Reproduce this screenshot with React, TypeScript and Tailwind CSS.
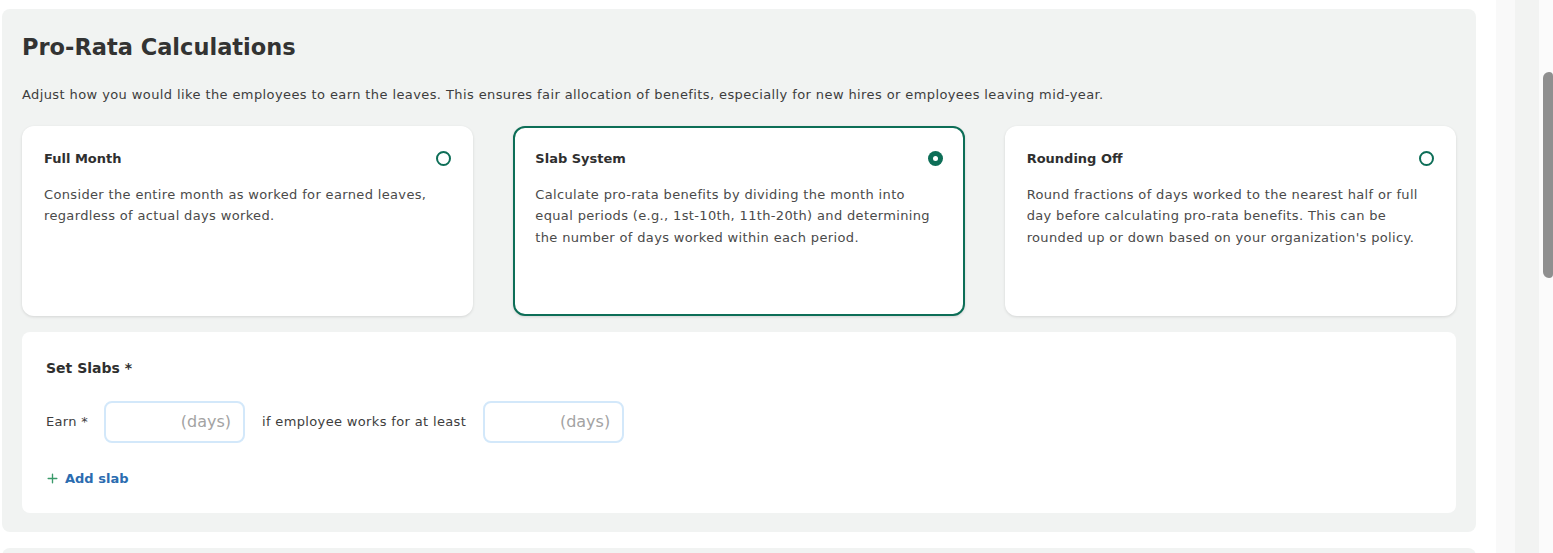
import React from 'react';

type Option = {
    title: string;
    description: string;
    selected?: boolean;
};

const options: Option[] = [
    {
        title: 'Full Month',
        description: 'Consider the entire month as worked for earned leaves, regardless of actual days worked.',
    },
    {
        title: 'Slab System',
        description:
            'Calculate pro-rata benefits by dividing the month into equal periods (e.g., 1st-10th, 11th-20th) and determining the number of days worked within each period.',
        selected: true,
    },
    {
        title: 'Rounding Off',
        description:
            "Round fractions of days worked to the nearest half or full day before calculating pro-rata benefits. This can be rounded up or down based on your organization's policy.",
    },
];

const Radio: React.FC<{ checked?: boolean }> = ({ checked }) =>
    checked ? (
        <span className="w-[15px] h-[15px] rounded-full bg-[#0d6e57] flex items-center justify-center shrink-0">
            <span className="w-[5px] h-[5px] rounded-full bg-white" />
        </span>
    ) : (
        <span className="w-[15px] h-[15px] rounded-full border-2 border-[#0d6e57] shrink-0" />
    );

const OptionCard: React.FC<Option> = ({ title, description, selected }) => (
    <div
        className={
            selected
                ? 'h-[190px] rounded-xl bg-white border-2 border-[#0d6e57] px-[20px] pt-[21px] shadow-[0_1px_3px_rgba(0,0,0,0.12)]'
                : 'h-[190px] rounded-xl bg-white border-2 border-transparent px-[20px] pt-[21px] shadow-[0_1px_3px_rgba(0,0,0,0.12)]'
        }
    >
        <div className="flex items-center justify-between">
            <h3 className="text-[13px] font-semibold text-[#2f2f2f]">{title}</h3>
            <Radio checked={selected} />
        </div>
        <p className="mt-[15px] text-[13px] tracking-[0.35px] leading-[21.5px] text-[#4a4a4a]">{description}</p>
    </div>
);

const DaysInput: React.FC = () => (
    <div className="w-[141px] h-[42px] rounded-lg border-2 border-[#d3e8fa] bg-white flex items-center justify-end pr-[12px]">
        <span className="text-[16px] text-[#a3a3a3]">(days)</span>
    </div>
);

export default function App() {
    return (
        <div className="w-[1553px] h-[553px] overflow-hidden bg-white flex" style={{ fontFamily: "'DejaVu Sans', 'Noto Sans', sans-serif" }}>
            {/* Main content */}
            <div className="w-[1496px] pl-[2px] pr-[20px] pt-[9px]">
                <section className="rounded-lg bg-[#f1f3f2] px-[20px] pt-[24px] pb-[19px]">
                    <h2 className="text-[22.5px] font-bold text-[#333333] leading-[28px]">Pro-Rata Calculations</h2>
                    <p className="mt-[24px] text-[13px] tracking-[0.4px] text-[#3d3d3d] leading-[20px]">
                        Adjust how you would like the employees to earn the leaves. This ensures fair allocation of benefits, especially for new hires or employees leaving mid-year.
                    </p>

                    <div className="mt-[21px] grid grid-cols-3 gap-[40px]">
                        {options.map((o) => (
                            <OptionCard key={o.title} {...o} />
                        ))}
                    </div>

                    <div className="mt-[16px] rounded-lg bg-white px-[24px] pt-[26px] pb-[24px]">
                        <h4 className="text-[14px] font-semibold text-[#2f2f2f] leading-[20px]">Set Slabs *</h4>
                        <div className="mt-[23px] flex items-center">
                            <span className="text-[13px] tracking-[0.3px] text-[#3d3d3d] w-[58px]">Earn *</span>
                            <DaysInput />
                            <span className="mx-[17px] text-[13px] tracking-[0.35px] text-[#3d3d3d]">if employee works for at least</span>
                            <DaysInput />
                        </div>
                        <button className="mt-[26px] flex items-center gap-[6px] text-[13px] font-semibold text-[#2b6cb0]">
                            <svg width="13" height="13" viewBox="0 0 24 24" fill="none" stroke="#3a9a6a" strokeWidth={2.5} strokeLinecap="round">
                                <path d="M12 4v16M4 12h16" />
                            </svg>
                            Add slab
                        </button>
                    </div>
                </section>
                <div className="mt-[16px] h-[40px] rounded-lg bg-[#f1f3f2]" />
            </div>

            {/* Side strips + scrollbar */}
            <div className="w-[19px] bg-[#f9f9f9]" />
            <div className="w-[24px] bg-[#f2f3f2]" />
            <div className="flex-1 bg-[#fbfbfb] pt-[72px] flex justify-end">
                <div className="w-[10px] h-[206px] rounded-l-md rounded-r-sm bg-[#8f8f8f]" />
            </div>
        </div>
    );
}
